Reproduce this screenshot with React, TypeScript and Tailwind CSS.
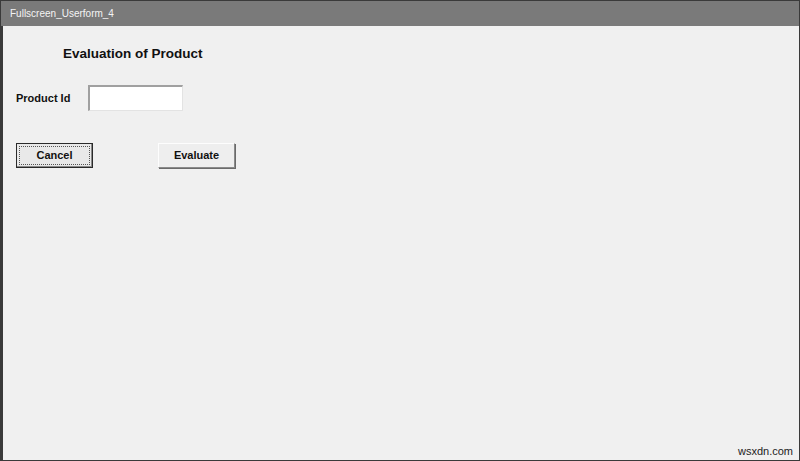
export default function App() {
  return (
    <div className="flex h-[461px] w-[800px] flex-col overflow-hidden border border-[#3a3a3a] bg-[#f0f0f0]" style={{ fontFamily: "'Liberation Sans', Arial, sans-serif" }}>
      <div className="flex h-[25px] shrink-0 items-center bg-[#7a7a7a] pl-[9px] text-[10px] text-[#f4f4f4]">
        Fullscreen_Userform_4
      </div>
      <div className="relative flex flex-1 flex-col border-l-2 border-[#3a3a3a] bg-[#f0f0f0] pl-[13px]">
        <h1 className="ml-[47px] mt-[19px] text-[13.5px] font-bold leading-[18px] text-[#111]">Evaluation of Product</h1>
        <div className="mt-[22px] flex items-center">
          <span className="w-[72px] text-[11px] font-bold text-[#111]">Product Id</span>
          <div className="h-[26px] w-[95px] border-l-2 border-t-2 border-b border-r border-l-[#a0a0a0] border-t-[#a0a0a0] border-b-[#e3e3e3] border-r-[#e3e3e3] bg-white" />
        </div>
        <div className="mt-[32px] flex items-center gap-[65px]">
          <button className="flex h-[25px] w-[77px] items-center justify-center border border-[#2a2a2a] bg-[#e9e9e9] p-[2px] shadow-[inset_-1px_-1px_0_#8a8a8a]">
            <span className="flex h-full w-full items-center justify-center border border-dotted border-[#555] text-[11px] font-bold text-[#111]">Cancel</span>
          </button>
          <button className="flex h-[25px] w-[77px] items-center justify-center border border-b-[#8a8a8a] border-r-[#8a8a8a] border-l-[#fdfdfd] border-t-[#fdfdfd] bg-[#eeeeee] text-[11px] font-bold text-[#111] shadow-[1px_1px_0_#6a6a6a]">
            Evaluate
          </button>
        </div>
        <span className="absolute bottom-[1px] right-[6px] text-[11px] text-[#222]">wsxdn.com</span>
      </div>
    </div>
  );
}
